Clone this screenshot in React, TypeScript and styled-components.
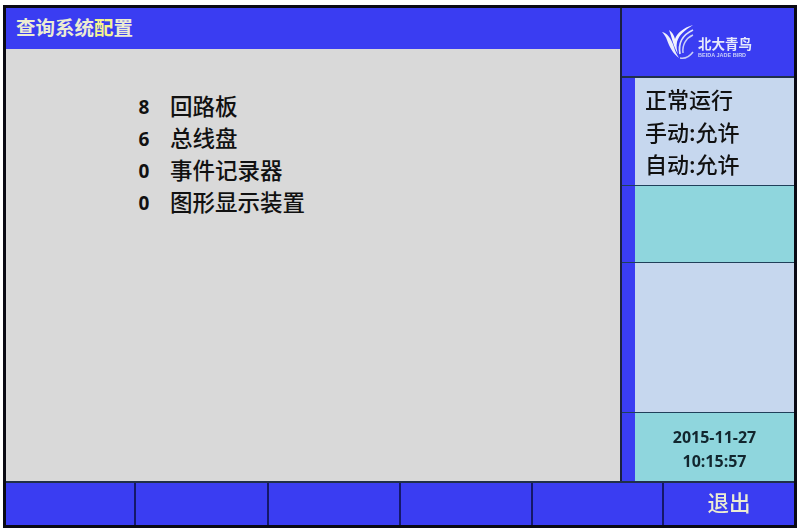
import React from "react";
import styled, { createGlobalStyle } from "styled-components";

const BLUE = "#3a3df2";
const CJK = `"Noto Sans CJK SC", "Liberation Sans", sans-serif`;

const systemItems = [
  { count: 8, name: "回路板" },
  { count: 6, name: "总线盘" },
  { count: 0, name: "事件记录器" },
  { count: 0, name: "图形显示装置" },
];

const App = () => {
  return (
    <>
      <GlobalStyle />
      <Frame>
        <Upper>
          <MainColumn>
            <TitleBar>
              查询系统<TitleMark>配</TitleMark>置
            </TitleBar>
            <ContentPanel>
              {systemItems.map((item, index) => (
                <ItemRow key={index}>
                  <ItemCount>{item.count}</ItemCount>
                  <ItemName>{item.name}</ItemName>
                </ItemRow>
              ))}
            </ContentPanel>
          </MainColumn>
          <SideColumn>
            <LogoBox>
              <Logo />
            </LogoBox>
            <SideRow $height={108} $color="#c6d7ee">
              <StatusText>
                <StatusLine>正常运行</StatusLine>
                <StatusLine>手动:允许</StatusLine>
                <StatusLine>自动:允许</StatusLine>
              </StatusText>
            </SideRow>
            <SideRow $height={77} $color="#8fd6dd" />
            <SideRow $height={150} $color="#c6d7ee" />
            <SideRow $height={68} $color="#8fd6dd" $last>
              <DateText>
                <div>2015-11-27</div>
                <div>10:15:57</div>
              </DateText>
            </SideRow>
          </SideColumn>
        </Upper>
        <Footer>
          <FooterCell $width={130} />
          <FooterCell $width={133} />
          <FooterCell $width={132} />
          <FooterCell $width={132} />
          <FooterCell $width={131} />
          <FooterCell $width={130} $last>
            退出
          </FooterCell>
        </Footer>
      </Frame>
    </>
  );
};

const Logo = () => (
  <LogoRow>
    <svg width="32" height="36" viewBox="0 0 32 36" fill="none">
      <path d="M0 8 C5 9 9 14 12 23 C13 27 15 31 17 34 C11 30 7 22 5 16 C4 13 2 10 0 8 Z" fill="#eceefc" />
      <path d="M7 6 C10 8 12 11 13 15 C15 9 21 4 31 1 C23 6 17 11 15 18 C14 22 15 27 16 30 C12 24 10 14 7 6 Z" fill="#f2f3fe" />
      <path d="M18 30 C16 20 20 11 31 6" stroke="#dde1fb" strokeWidth="1.8" />
      <path d="M21 29 C20 21 24 14 31 11" stroke="#c9cff8" strokeWidth="1.5" />
      <path d="M18 34 C23 35 28 32 31 28" stroke="#c9cff8" strokeWidth="1.6" />
    </svg>
    <LogoText>
      <LogoName>北大青鸟</LogoName>
      <LogoSub>BEIDA JADE BIRD</LogoSub>
    </LogoText>
  </LogoRow>
);

const GlobalStyle = createGlobalStyle`
  html, body {
    margin: 0;
    padding: 0;
    background: #ffffff;
    font-family: ${CJK};
  }
`;

const Frame = styled.div`
  box-sizing: border-box;
  width: 794px;
  height: 523px;
  margin: 5px 0 0 3px;
  border: 3px solid #0a0a14;
  display: flex;
  flex-direction: column;
  filter: blur(0.5px);
`;

const Upper = styled.div`
  display: flex;
  height: 473px;
  border-bottom: 2px solid #20304a;
`;

const MainColumn = styled.div`
  width: 614px;
  display: flex;
  flex-direction: column;
`;

const TitleBar = styled.div`
  box-sizing: border-box;
  height: 41px;
  padding: 2px 0 0 10px;
  background: ${BLUE};
  color: #ececd2;
  font-size: 19.5px;
  line-height: 33px;
  font-weight: 700;
`;

const TitleMark = styled.span`
  color: #f6f48e;
`;

const ContentPanel = styled.div`
  flex: 1;
  background: #d9d9d9;
  padding-top: 42px;
`;

const ItemRow = styled.div`
  display: flex;
  align-items: center;
  height: 32px;
  padding-left: 128px;
  color: #111111;
`;

const ItemCount = styled.div`
  width: 20px;
  margin-right: 16px;
  text-align: center;
  font-family: "Open Sans", sans-serif;
  font-weight: 700;
  font-size: 19px;
`;

const ItemName = styled.div`
  font-size: 22.5px;
  font-weight: 500;
  line-height: 32px;
  margin-top: -4px;
`;

const SideColumn = styled.div`
  flex: 1;
  display: flex;
  flex-direction: column;
  border-left: 2px solid #1a2040;
`;

const LogoBox = styled.div`
  box-sizing: border-box;
  height: 70px;
  background: ${BLUE};
  border-bottom: 2px solid #20304a;
  display: flex;
  align-items: center;
  padding-left: 40px;
`;

const LogoRow = styled.div`
  display: flex;
  align-items: center;
  gap: 4px;
`;

const LogoText = styled.div`
  display: flex;
  flex-direction: column;
  gap: 2px;
  color: #e6e9fb;
  margin-top: 8px;
`;

const LogoName = styled.div`
  font-size: 13.5px;
  line-height: 16px;
  font-weight: 700;
`;

const LogoSub = styled.div`
  font-family: "Liberation Sans", sans-serif;
  font-size: 5.5px;
  line-height: 5px;
  font-weight: 700;
  white-space: nowrap;
  color: #c9cff8;
`;

const SideRow = styled.div<{ $height: number; $color: string; $last?: boolean }>`
  box-sizing: border-box;
  height: ${({ $height }) => $height}px;
  flex: ${({ $last }) => ($last ? 1 : "none")};
  background: ${BLUE};
  padding-left: 13px;
  border-bottom: ${({ $last }) => ($last ? "none" : "1px solid #20405a")};
  display: flex;

  & > * {
    flex: 1;
    background: ${({ $color }) => $color};
  }

  &:empty::after {
    content: "";
    flex: 1;
    background: ${({ $color }) => $color};
  }
`;

const StatusText = styled.div`
  padding: 4px 0 0 10px;
  color: #111111;
`;

const StatusLine = styled.div`
  font-size: 22px;
  line-height: 32.5px;
  font-weight: 500;
`;

const DateText = styled.div`
  padding-top: 12px;
  text-align: center;
  color: #12262e;
  font-family: "Open Sans", sans-serif;
  font-weight: 700;
  font-size: 16px;
  line-height: 24px;
`;

const Footer = styled.div`
  flex: 1;
  display: flex;
  background: ${BLUE};
`;

const FooterCell = styled.div<{ $width: number; $last?: boolean }>`
  box-sizing: border-box;
  width: ${({ $width }) => $width}px;
  padding-bottom: 5px;
  border-right: ${({ $last }) => ($last ? "none" : "2px solid #14186a")};
  color: #ececd2;
  font-size: 21.5px;
  font-weight: 500;
  display: flex;
  align-items: center;
  justify-content: center;
`;

export default App;
